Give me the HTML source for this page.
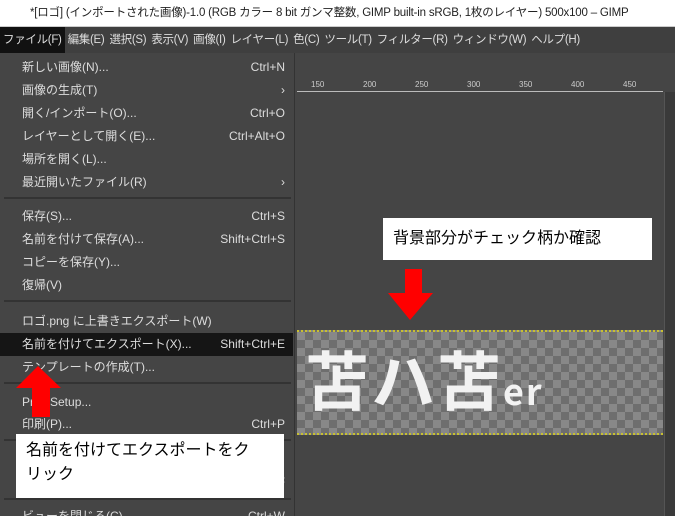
<!DOCTYPE html>
<html><head><meta charset="utf-8"><style>
*{margin:0;padding:0;box-sizing:border-box}
html,body{width:675px;height:516px;overflow:hidden}
body{background:#454545;font-family:"Liberation Sans","Noto Sans CJK JP",sans-serif;position:relative;font-size:12px;color:#ddd}
.abs{position:absolute}
#title{left:0;top:0;width:675px;height:27px;background:#fff;color:#222;font-size:11.5px;line-height:27px;padding-left:30px;white-space:nowrap;border-bottom:1px solid #ccc;letter-spacing:-0.2px}
#menubar{left:0;top:27px;width:675px;height:26px;background:#3f3f3f;line-height:26px;font-size:11.5px;color:#ddd;white-space:nowrap;letter-spacing:-0.3px}
#menubar span{margin-right:5px}
#menubar .act{background:#111;padding:0 3px;display:inline-block;margin-right:3px}
#menu{left:0;top:53px;width:295px;height:463px;background:#454545;border-right:1px solid #333}
.it{position:absolute;left:0;width:293px;height:23px;line-height:23px;padding-left:22px;font-size:12px;color:#ddd;white-space:nowrap}
.it .k{position:absolute;right:8px;top:0}
.sep{position:absolute;left:4px;width:287px;height:2px;background:#333}
.hl{background:#151515}
#ruler{left:297px;top:80px;width:366px;height:12px;background:#454545;border-bottom:1px solid #bbb;font-size:8px;color:#ccc}
.ck{left:297px;top:330px;width:366px;height:105px;background-color:#888;background-image:linear-gradient(45deg,#6e6e6e 25%,transparent 25%,transparent 75%,#6e6e6e 75%),linear-gradient(45deg,#6e6e6e 25%,transparent 25%,transparent 75%,#6e6e6e 75%);background-size:16px 16px;background-position:0 0,8px 8px;border-top:2px dotted #c8c030;border-bottom:2px dotted #c8c030}
.box{background:#fff;color:#000;font-size:16px}
</style></head><body>
<div id="title" class="abs">*[ロゴ] (インポートされた画像)-1.0 (RGB カラー 8 bit ガンマ整数, GIMP built-in sRGB, 1枚のレイヤー) 500x100 – GIMP</div>
<div id="menubar" class="abs"><span class="act">ファイル(F)</span><span>編集(E)</span><span>選択(S)</span><span>表示(V)</span><span>画像(I)</span><span>レイヤー(L)</span><span>色(C)</span><span>ツール(T)</span><span>フィルター(R)</span><span>ウィンドウ(W)</span><span>ヘルプ(H)</span></div>
<div id="ruler" class="abs"><span style="position:absolute;left:14px">150</span><span style="position:absolute;left:66px">200</span><span style="position:absolute;left:118px">250</span><span style="position:absolute;left:170px">300</span><span style="position:absolute;left:222px">350</span><span style="position:absolute;left:274px">400</span><span style="position:absolute;left:326px">450</span></div>
<div class="abs" style="left:664px;top:92px;width:11px;height:424px;background:#3a3a3a;border-left:1px solid #555"></div>
<div class="abs ck"></div>
<div class="abs" style="left:305px;top:338px;font-size:64px;font-weight:bold;color:#f2f2f2;line-height:80px;letter-spacing:2px;font-family:'Noto Sans CJK JP',sans-serif">苫ハ苫<span style="font-size:36px">er</span></div>
<div id="menu" class="abs">
<div class="it" style="top:3px">新しい画像(N)...<span class="k">Ctrl+N</span></div>
<div class="it" style="top:26px">画像の生成(T)<span class="k">›</span></div>
<div class="it" style="top:49px">開く/インポート(O)...<span class="k">Ctrl+O</span></div>
<div class="it" style="top:72px">レイヤーとして開く(E)...<span class="k">Ctrl+Alt+O</span></div>
<div class="it" style="top:95px">場所を開く(L)...</div>
<div class="it" style="top:118px">最近開いたファイル(R)<span class="k">›</span></div>
<div class="sep" style="top:144px"></div>
<div class="it" style="top:152px">保存(S)...<span class="k">Ctrl+S</span></div>
<div class="it" style="top:175px">名前を付けて保存(A)...<span class="k">Shift+Ctrl+S</span></div>
<div class="it" style="top:198px">コピーを保存(Y)...</div>
<div class="it" style="top:221px">復帰(V)</div>
<div class="sep" style="top:247px"></div>
<div class="it" style="top:257px">ロゴ.png に上書きエクスポート(W)</div>
<div class="it hl" style="top:280px">名前を付けてエクスポート(X)...<span class="k">Shift+Ctrl+E</span></div>
<div class="it" style="top:303px">テンプレートの作成(T)...</div>
<div class="sep" style="top:329px"></div>
<div class="it" style="top:338px">Print Setup...</div>
<div class="it" style="top:360px">印刷(P)...<span class="k">Ctrl+P</span></div>
<div class="sep" style="top:386px"></div>
<div class="it" style="top:418px"><span class="k">F</span></div>
<div class="sep" style="top:445px"></div>
<div class="it" style="top:452px">ビューを閉じる(C)<span class="k">Ctrl+W</span></div>
</div>
<div class="abs box" style="left:383px;top:218px;width:269px;height:42px;line-height:42px;padding-left:10px">背景部分がチェック柄か確認</div>
<svg class="abs" style="left:0;top:0" width="675" height="516">
<polygon points="405,269 422,269 422,293 433,293 410,320 388,293 405,293" fill="#f00"/>
<polygon points="32,417 50,417 50,388 61,388 38,366 16,388 32,388" fill="#f00"/>
</svg>
<div class="abs box" style="left:16px;top:434px;width:268px;height:64px;padding:5px 10px;line-height:24px;white-space:nowrap">名前を付けてエクスポートをク<br>リック</div>
</body></html>
